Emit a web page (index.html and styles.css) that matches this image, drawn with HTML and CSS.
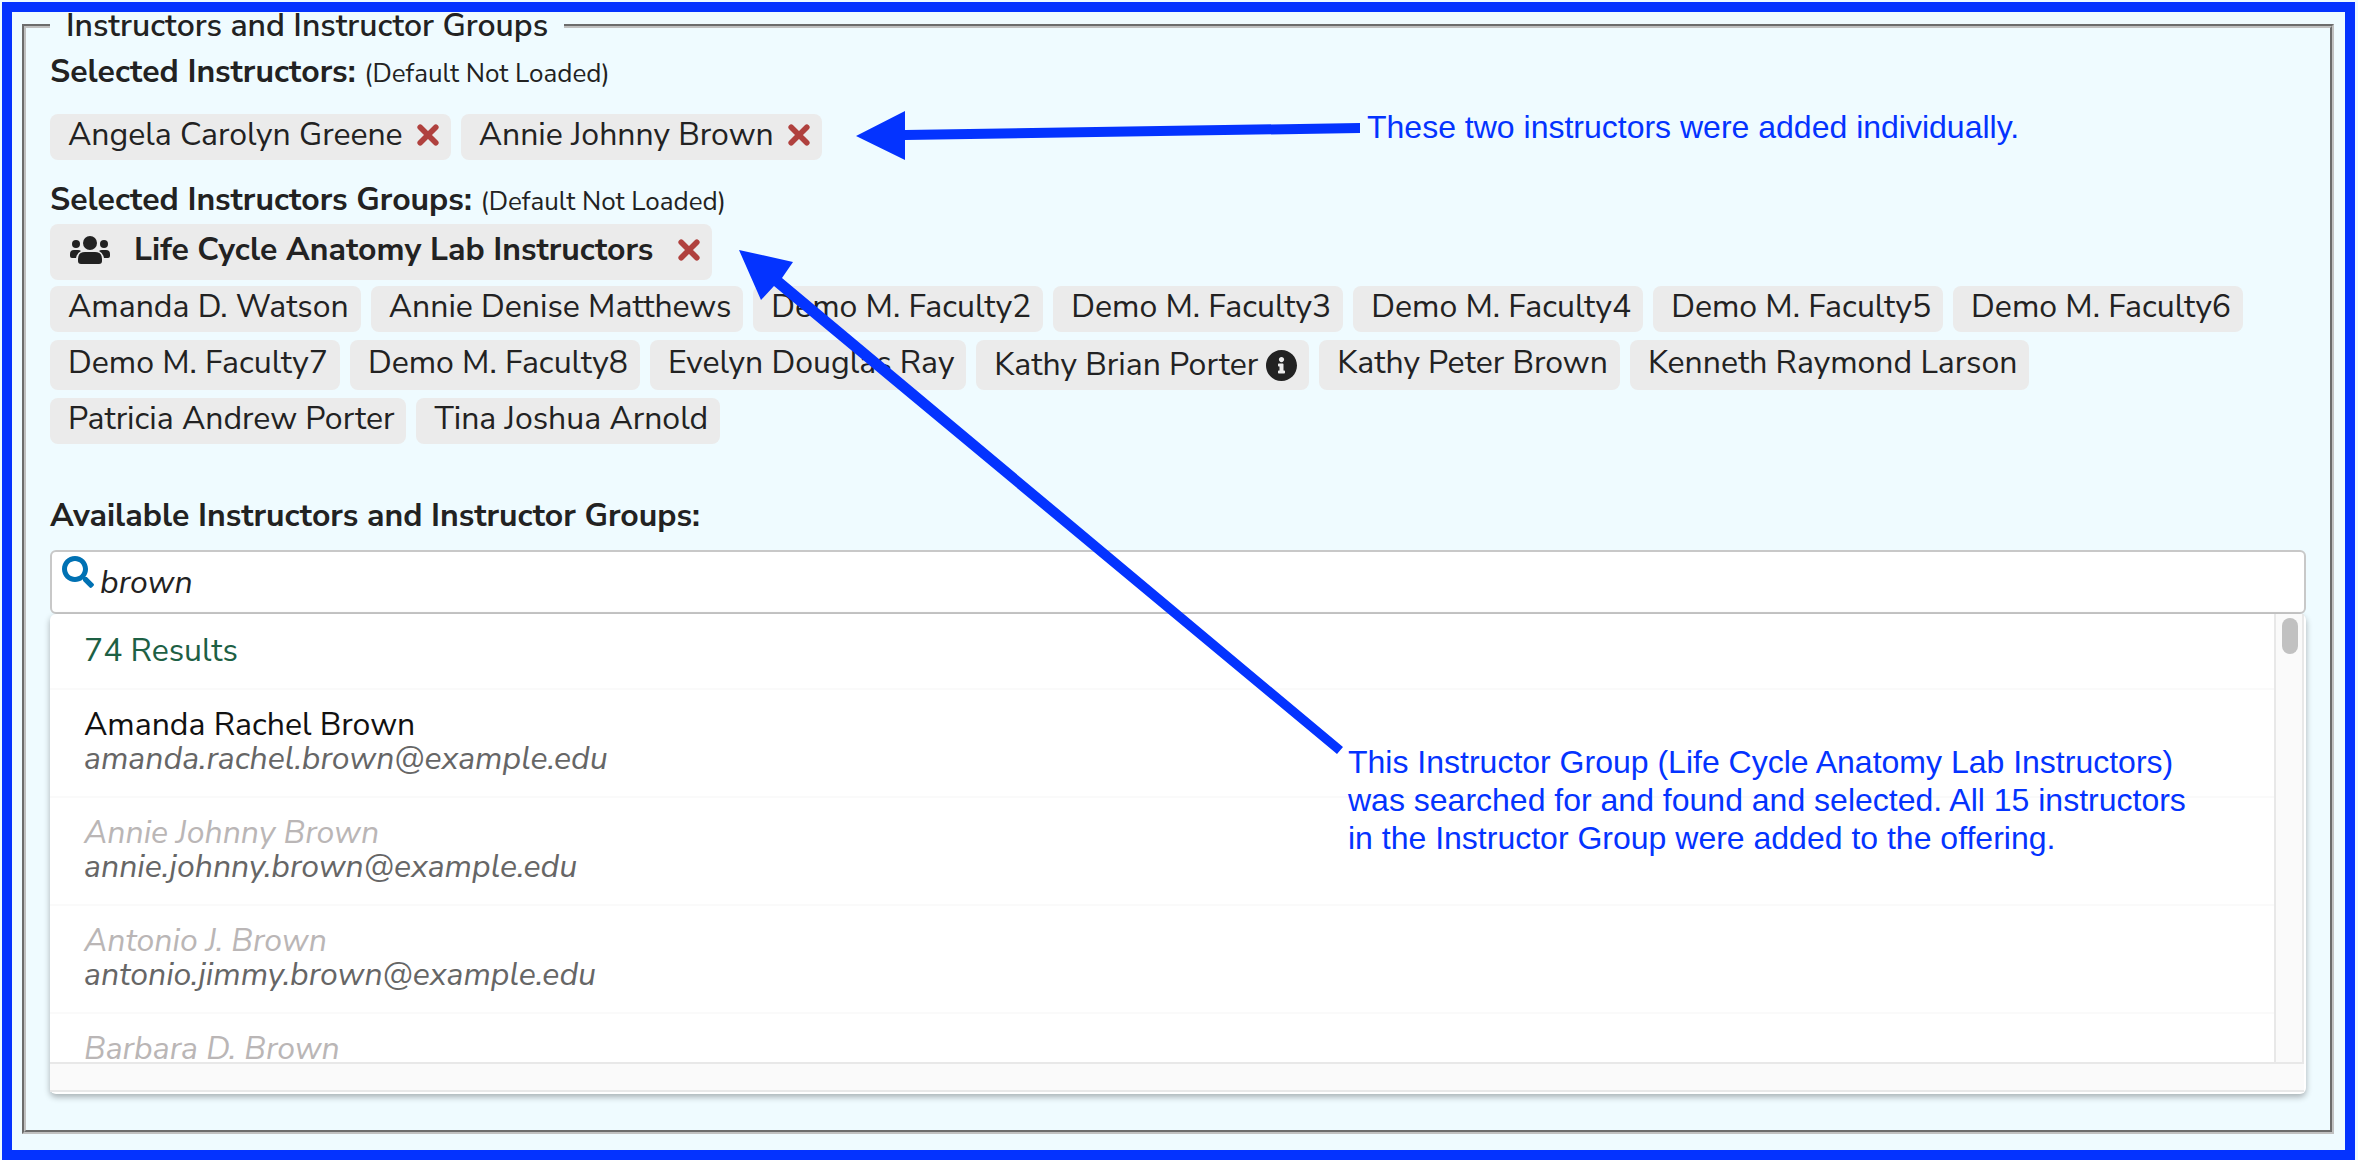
FILE: index.html
```
<!DOCTYPE html>
<html lang="en">
<head>
<meta charset="utf-8">
<title>Instructors and Instructor Groups</title>
<link rel="stylesheet" href="styles.css">
</head>
<body>
<svg class="sprite" aria-hidden="true">
  <symbol id="icon-remove" viewBox="0 0 22 22">
    <path d="M3.2 3.2 18.8 18.8M18.8 3.2 3.2 18.8" fill="none" stroke="currentColor" stroke-width="5.6" stroke-linecap="round"/>
  </symbol>
  <symbol id="icon-users" viewBox="0 0 40 28">
    <g fill="currentColor">
      <circle cx="20" cy="7" r="7"/>
      <circle cx="6" cy="8" r="4"/>
      <circle cx="34" cy="8" r="4"/>
      <path d="M8 25V23Q8 16 15 16H25Q32 16 32 23V25Q32 28 29 28H11Q8 28 8 25Z"/>
      <path d="M2 22Q0 22 0 20V18Q0 14 4 14H8Q10 14 11 15Q7 17 6 22Z"/>
      <path d="M38 22Q40 22 40 20V18Q40 14 36 14H32Q30 14 29 15Q33 17 34 22Z"/>
    </g>
  </symbol>
  <symbol id="icon-info" viewBox="8 8 496 496">
    <path fill="currentColor" d="M256 8C119.043 8 8 119.083 8 256c0 136.997 111.043 248 248 248s248-111.003 248-248C504 119.083 392.957 8 256 8zm0 110c23.196 0 42 18.804 42 42s-18.804 42-42 42-42-18.804-42-42 18.804-42 42-42zm56 254c0 6.627-5.373 12-12 12h-88c-6.627 0-12-5.373-12-12v-24c0-6.627 5.373-12 12-12h12v-64h-12c-6.627 0-12-5.373-12-12v-24c0-6.627 5.373-12 12-12h64c6.627 0 12 5.373 12 12v100h12c6.627 0 12 5.373 12 12v24z"/>
  </symbol>
  <symbol id="icon-search" viewBox="0 0 512 512">
    <path fill="currentColor" d="M505 442.700L405.300 343c-4.500-4.500-10.600-7-17-7H372c27.600-35.300 44-79.700 44-128C416 93.100 322.900 0 208 0S0 93.100 0 208s93.100 208 208 208c48.300 0 92.700-16.400 128-44v16.300c0 6.400 2.500 12.500 7 17l99.700 99.700c9.400 9.400 24.600 9.400 33.900 0l28.300-28.300c9.400-9.400 9.400-24.600.1-34zM208 336c-70.700 0-128-57.200-128-128 0-70.700 57.200-128 128-128 70.700 0 128 57.200 128 128 0 70.700-57.200 128-128 128z"/>
  </symbol>
</svg>

<main class="frame">
  <fieldset class="panel">
    <legend>Instructors and Instructor Groups</legend>

    <h2 class="heading">Selected Instructors: <small>(Default Not Loaded)</small></h2>
    <ul class="chips chips-single">
      <li class="chip">Angela Carolyn Greene <button type="button" class="remove" aria-label="Remove Angela Carolyn Greene"><svg><use href="#icon-remove"/></svg></button></li>
      <li class="chip">Annie Johnny Brown <button type="button" class="remove" aria-label="Remove Annie Johnny Brown"><svg><use href="#icon-remove"/></svg></button></li>
    </ul>

    <h2 class="heading">Selected Instructors Groups: <small>(Default Not Loaded)</small></h2>
    <div class="group">
      <svg class="users"><use href="#icon-users"/></svg>
      <span>Life Cycle Anatomy Lab Instructors</span>
      <button type="button" class="remove" aria-label="Remove Life Cycle Anatomy Lab Instructors"><svg><use href="#icon-remove"/></svg></button>
    </div>
    <ul class="chips">
      <li class="chip">Amanda D. Watson</li>
      <li class="chip">Annie Denise Matthews</li>
      <li class="chip">Demo M. Faculty2</li>
      <li class="chip">Demo M. Faculty3</li>
      <li class="chip">Demo M. Faculty4</li>
      <li class="chip">Demo M. Faculty5</li>
      <li class="chip">Demo M. Faculty6</li>
      <li class="chip">Demo M. Faculty7</li>
      <li class="chip">Demo M. Faculty8</li>
      <li class="chip">Evelyn Douglas Ray</li>
      <li class="chip chip-info">Kathy Brian Porter <svg class="info"><use href="#icon-info"/></svg></li>
      <li class="chip">Kathy Peter Brown</li>
      <li class="chip">Kenneth Raymond Larson</li>
      <li class="chip">Patricia Andrew Porter</li>
      <li class="chip">Tina Joshua Arnold</li>
    </ul>

    <label class="heading available" for="search">Available Instructors and Instructor Groups:</label>
    <div class="search">
      <svg><use href="#icon-search"/></svg>
      <input id="search" type="text" value="brown">
    </div>
    <div class="results">
      <ul class="list">
        <li class="count">74 Results</li>
        <li>Amanda Rachel Brown<em>amanda.rachel.brown@example.edu</em></li>
        <li class="used">Annie Johnny Brown<em>annie.johnny.brown@example.edu</em></li>
        <li class="used">Antonio J. Brown<em>antonio.jimmy.brown@example.edu</em></li>
        <li class="used">Barbara D. Brown</li>
      </ul>
      <div class="track"><div class="thumb"></div></div>
      <div class="track-bottom"></div>
    </div>
  </fieldset>

  <svg class="arrows" viewBox="0 0 2358 1160" aria-hidden="true">
    <g fill="#0433ff">
      <path d="M856 136 905 111V130L1360 123V133L905 140V160Z"/>
      <path d="M739 250 793 262 782 278 1343 747 1337 754 774 286 761 300Z"/>
    </g>
  </svg>
  <p class="note note-individual">These two instructors were added individually.</p>
  <p class="note note-group">This Instructor Group (Life Cycle Anatomy Lab Instructors)<br>was searched for and found and selected. All 15 instructors<br>in the Instructor Group were added to the offering.</p>
</main>
</body>
</html>
```
FILE: styles.css
```
* { box-sizing: border-box; }

body {
  margin: 0;
  padding: 2px 3px 0 2px;
  background: #effbff;
  color: #222;
  font: 32px/44px "Nunito Sans", Nunito, Lato, sans-serif;
}

.sprite { position: absolute; width: 0; height: 0; }

svg { display: block; }

ul { margin: 0; padding: 0; list-style: none; }

.frame { border: 10px solid #0433ff; padding: 0 11px 16px 10px; }

.panel {
  min-width: 0;
  margin: 0;
  padding: 10px 24px 36px;
  border: 4px groove #c0c0c0;
}

.panel legend { padding: 0 16px; line-height: 28px; font-weight: 600; }

.heading { display: block; margin: 0; font-size: 32px; font-weight: 700; line-height: 44px; }

.heading small { font-size: 26px; font-weight: 400; }

.chips { display: flex; flex-wrap: wrap; gap: 8px 10px; }

.chips-single { margin: 18px 0; }

.chip {
  display: flex;
  align-items: center;
  gap: 14px;
  min-height: 46px;
  padding: 0 12px 4px 18px;
  border-radius: 8px;
  background: #ebebeb;
  line-height: 42px;
}

.chip-info { gap: 8px; min-height: 50px; padding-bottom: 0; }

.remove {
  display: flex;
  align-items: center;
  padding: 0;
  border: 0;
  background: none;
  color: #b0413e;
}

.remove svg { width: 22px; height: 22px; }

.group {
  display: flex;
  align-items: center;
  gap: 24px;
  width: fit-content;
  min-height: 56px;
  margin-bottom: 6px;
  padding: 0 12px 4px 20px;
  border-radius: 8px;
  background: #ebebeb;
  font-weight: 700;
}

.users { width: 40px; height: 28px; }

.info { width: 31px; height: 31px; }

.available { margin-top: 50px; }

.search {
  display: flex;
  gap: 6px;
  margin-top: 12px;
  padding: 4px 10px;
  border: 2px solid #c8c8c8;
  border-radius: 6px;
  background: #fff;
}

.search svg { width: 32px; height: 32px; color: #0071b3; }

.search input {
  flex: 1;
  height: 52px;
  padding: 0;
  border: 0;
  outline: 0;
  background: none;
  color: #222;
  font: italic 32px/44px "Nunito Sans", Nunito, Lato, sans-serif;
}

.results {
  display: grid;
  grid-template: 448px 30px / 1fr 30px;
  padding: 0 2px 2px 0;
  border-radius: 6px;
  background: #fff;
  box-shadow: 0 3px 6px rgba(0, 0, 0, 0.3);
}

.list { overflow: hidden; color: #111; }

.list li { padding: 18px 34px 20px; border-bottom: 2px solid #fafafa; line-height: 34px; }

.list em { display: block; color: #666; }

.list .count { padding: 20px 34px; color: #1d6044; }

.list .used { color: #bab6b6; font-style: italic; }

.track { border: solid #e8e8e8; border-width: 0 2px; background: #fafafa; }

.thumb { width: 16px; height: 36px; margin: 4px 4px 0 auto; border-radius: 8px; background: #c1c1c1; }

.track-bottom { grid-column: 1 / -1; border: solid #e8e8e8; border-width: 2px 0; background: #fafafa; }

.arrows { position: absolute; top: 0; left: 0; width: 2358px; height: 1160px; pointer-events: none; }

.note { position: absolute; margin: 0; color: #0433ff; font: 32px/38px "Liberation Sans", Arial, sans-serif; white-space: nowrap; }

.note-individual { top: 108px; left: 1367px; }

.note-group { top: 743px; left: 1348px; }
```
